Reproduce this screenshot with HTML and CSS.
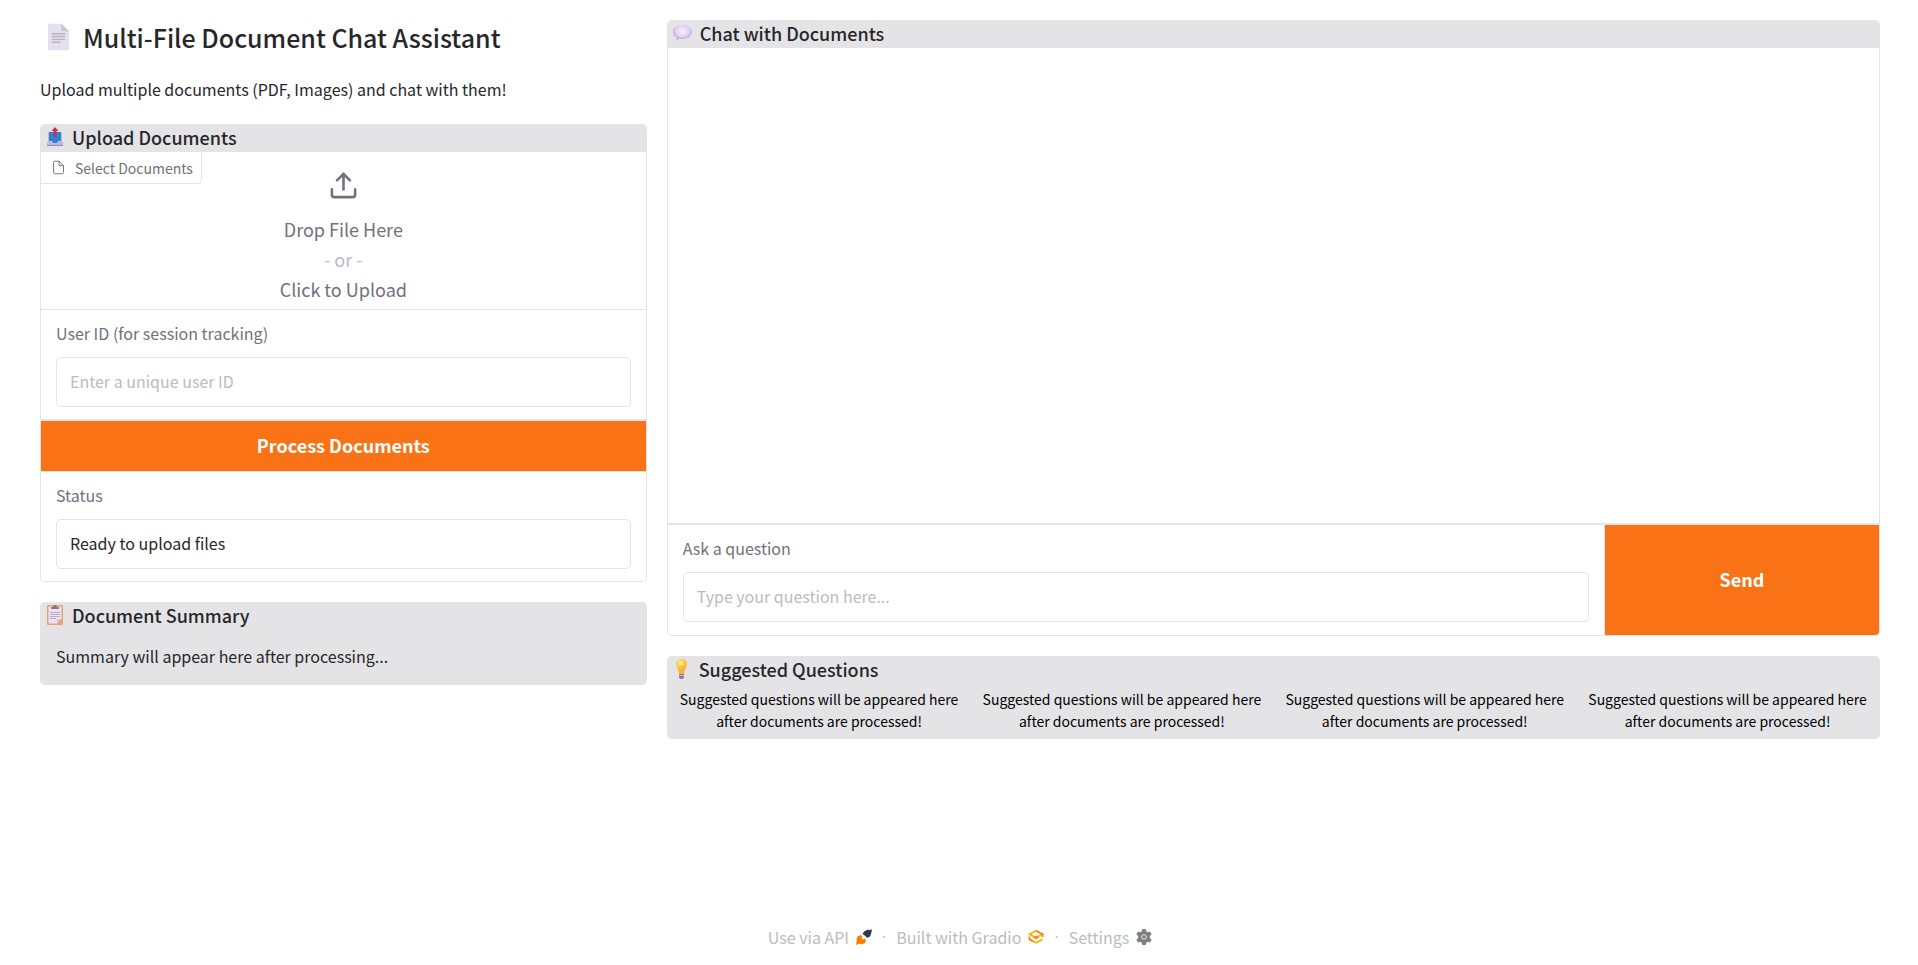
FILE: index.html
```html
<!DOCTYPE html>
<html lang="en">
<head>
    <meta charset="UTF-8">
    <meta name="viewport" content="width=device-width, initial-scale=1.0">
    <title>Multi-File Document Chat Assistant</title>
    <link rel="stylesheet" href="styles.css">
</head>
<body>
    <main class="columns">
        <div class="column">
            <header>
                <h1>
                    <svg class="title-icon" viewBox="0 0 22 28" aria-hidden="true">
                        <path d="M0 1q0-1 1-1h13l8 8v19q0 1-1 1H1q-1 0-1-1z" fill="#e6dff0"/>
                        <path d="M14 0l8 8h-7q-1 0-1-1z" fill="#cbc5d1"/>
                        <path d="M4 10.500h14M4 13.500h14M4 16.500h14M4 19.500h9" stroke="#b9b2bf" stroke-width="1.500"/>
                    </svg>
                    Multi-File Document Chat Assistant
                </h1>
                <p>Upload multiple documents (PDF, Images) and chat with them!</p>
            </header>

            <section class="group">
                <h2>
                    <svg class="icon" viewBox="0 0 16 20" aria-hidden="true">
                        <path d="M1 5h14v12H1z" fill="#cbbcdf"/>
                        <path d="M2 5h12v9h-3l-1 2H6l-1-2H2z" fill="#2b83d6"/>
                        <path d="M0 15h4l2 2h4l2-2h4v4H0z" fill="#c5b3dc"/>
                        <path d="M0 18h16v1H0z" fill="#9b86b5"/>
                        <path d="M8 0l3.500 4H9.500v6h-3V4h-2z" fill="#d5295b"/>
                    </svg>
                    Upload Documents
                </h2>
                <div class="file-block">
                    <span class="file-label">
                        <svg viewBox="0 0 24 24" aria-hidden="true">
                            <path d="M13 2H6a2 2 0 0 0-2 2v16a2 2 0 0 0 2 2h12a2 2 0 0 0 2-2V9z"/>
                            <path d="M13 2v7h7"/>
                        </svg>
                        Select Documents
                    </span>
                    <label class="dropzone">
                        <input type="file" multiple>
                        <svg viewBox="0 0 24 24" aria-hidden="true">
                            <path d="M21 15v4a2 2 0 0 1-2 2H5a2 2 0 0 1-2-2v-4"/>
                            <path d="M17 8l-5-5-5 5"/>
                            <path d="M12 3v12"/>
                        </svg>
                        <span>Drop File Here</span>
                        <span class="or">- or -</span>
                        <span>Click to Upload</span>
                    </label>
                </div>
                <div class="field">
                    <label for="user-id">User ID (for session tracking)</label>
                    <input type="text" id="user-id" placeholder="Enter a unique user ID">
                </div>
                <button class="primary process" type="button">Process Documents</button>
                <div class="field">
                    <label for="status">Status</label>
                    <input type="text" id="status" value="Ready to upload files" readonly>
                </div>
            </section>

            <section class="group filled">
                <h2>
                    <svg class="icon" viewBox="0 0 16 20" aria-hidden="true">
                        <rect width="16" height="20" rx="1" fill="#e3a272"/>
                        <path d="M1.500 1.500h13V14l-4.500 4.500H1.500z" fill="#ece4f5"/>
                        <path d="M10 18.500V14h4.500z" fill="#cfc3da"/>
                        <path d="M4 4V2h2q0-2 2-2t2 2h2v2z" fill="#81798a"/>
                        <path d="M3 7.500h10M3 9.500h10M3 11.500h10M3 13.500h6" stroke="#b5adc0"/>
                    </svg>
                    Document Summary
                </h2>
                <p class="summary">Summary will appear here after processing...</p>
            </section>
        </div>

        <div class="column">
            <section class="group">
                <h2>
                    <svg class="icon bubble" viewBox="0 0 19 16" aria-hidden="true">
                        <defs>
                            <radialGradient id="bubble" cx=".5" cy=".4">
                                <stop offset="0" stop-color="#f6effb"/>
                                <stop offset=".7" stop-color="#e0d4f0"/>
                                <stop offset="1" stop-color="#c3aee0"/>
                            </radialGradient>
                        </defs>
                        <path d="M9.500 0C15 0 19 3 19 7s-4 7-9.500 7q-2 0-3.500-.5Q5 15 3 15.500q1-1.500.5-3Q0 10 0 7c0-4 4-7 9.500-7z" fill="url(#bubble)"/>
                    </svg>
                    Chat with Documents
                </h2>
                <div class="chat-log"></div>
                <div class="ask-row">
                    <div class="field">
                        <label for="question">Ask a question</label>
                        <input type="text" id="question" placeholder="Type your question here...">
                    </div>
                    <button class="primary send" type="button">Send</button>
                </div>
            </section>

            <section class="group filled">
                <h2>
                    <svg class="icon" viewBox="0 0 16 20" aria-hidden="true">
                        <defs>
                            <radialGradient id="bulb" cx=".4" cy=".3">
                                <stop offset="0" stop-color="#fff08a"/>
                                <stop offset="1" stop-color="#fbb93d"/>
                            </radialGradient>
                        </defs>
                        <path d="M7.500 0q5.500 0 5.500 5.500 0 2.500-1.500 4.500T10 15H5q0-3-1.500-5T2 5.500Q2 0 7.500 0z" fill="url(#bulb)"/>
                        <path d="M6 15V9q-1.500-2 0-2t1.500 1.500Q7.500 7 9 7t0 2v6" fill="none" stroke="#ef9d2e" stroke-width=".8"/>
                        <path d="M5 15h5v3.500L8.500 20h-2L5 18.500z" fill="#8d78a8"/>
                        <path d="M5 16.500h5" stroke="#c9b8dc"/>
                    </svg>
                    Suggested Questions
                </h2>
                <div class="suggestions">
                    <button type="button">Suggested questions will be appeared here after documents are processed!</button>
                    <button type="button">Suggested questions will be appeared here after documents are processed!</button>
                    <button type="button">Suggested questions will be appeared here after documents are processed!</button>
                    <button type="button">Suggested questions will be appeared here after documents are processed!</button>
                </div>
            </section>
        </div>
    </main>

    <footer>
        <a href="#api">
            Use via API
            <svg viewBox="0 0 16 16" aria-hidden="true">
                <path d="M16 0l-.8 4.500-1.200 3-3 1.500-.8-1.200L8 6 6.500 5 8 2.500l3.500-1.700 3 .2z" fill="#2f3a4f"/>
                <path d="M0 16l.8-4.500-.3-2L2 7l3-1 1.500 1.500-1 1.500 1.500 1.500L8.500 9.500 10 11l-1 3-3 1.200-3-.5z" fill="#ff7c00"/>
            </svg>
        </a>
        <span class="dot">·</span>
        <a href="#gradio">
            Built with Gradio
            <svg viewBox="0 0 17 16" aria-hidden="true">
                <path d="M1.500 5l7-3.700 7 3.700-7 3.700z" fill="none" stroke="#fbb304" stroke-width="1.900"/>
                <path d="M8.500 1.300l7 3.700v3" fill="none" stroke="#f98613" stroke-width="1.900"/>
                <path d="M5 8.500l3.500-2 3.500 2-3.500 2z" fill="#f98613"/>
                <path d="M1.500 10.500l7 3.700 7-3.700" fill="none" stroke="#fbb304" stroke-width="1.900"/>
                <path d="M1.500 7.500v3l4 2" fill="none" stroke="#f98613" stroke-width="1.900"/>
            </svg>
        </a>
        <span class="dot">·</span>
        <a href="#settings">
            Settings
            <svg viewBox="0 0 24 24" aria-hidden="true">
                <path d="M9.500 0h5l.8 3.500 2.200 1.200 3.400-1 2.500 4.300-2.600 2.500v3l2.600 2.500-2.500 4.300-3.400-1-2.200 1.200-.8 3.500h-5l-.8-3.500-2.200-1.200-3.400 1L.6 16l2.600-2.500v-3L.6 8l2.500-4.300 3.400 1 2.200-1.200z" fill="#7f7f7f"/>
                <circle cx="12" cy="12" r="3.500" fill="#7f7f7f" stroke="#e4e4e4" stroke-width="1.500"/>
            </svg>
        </a>
    </footer>
</body>
</html>
```
FILE: styles.css
```css
* {
    box-sizing: border-box;
}

body {
    margin: 0;
    min-height: 100vh;
    padding: 20px 38px 16px 40px;
    display: flex;
    flex-direction: column;
    justify-content: space-between;
    font-family: "Source Sans Pro", "Noto Sans CJK SC", sans-serif;
    font-size: 16px;
    line-height: 24px;
    color: #27272a;
    background-color: #fff;
}

button,
input {
    font: inherit;
    color: inherit;
}

.columns {
    display: grid;
    grid-template-columns: 1fr 2fr;
    gap: 20px;
}

.column {
    display: flex;
    flex-direction: column;
    gap: 20px;
    min-width: 0;
}

h1 {
    display: flex;
    align-items: center;
    gap: 14px;
    margin: 0 0 24px;
    padding-left: 8px;
    font-size: 25px;
    font-weight: 500;
    line-height: 34px;
}

.title-icon {
    width: 21px;
    height: 28px;
}

header p {
    margin: 0 0 4px;
    line-height: 22px;
}

h2 {
    display: flex;
    align-items: center;
    gap: 9px;
    margin: 0;
    padding: 0 6px 2px;
    font-size: 18px;
    font-weight: 500;
    line-height: 26px;
    background-color: #e4e4e7;
}

.icon {
    width: 16px;
    height: 20px;
}

.bubble {
    width: 19px;
    height: 16px;
    margin: 0 -1px;
}

.group {
    border: 1px solid #e4e4e7;
    border-top: none;
    border-radius: 5px;
    overflow: hidden;
}

.filled {
    background-color: #e4e4e7;
}

/* file upload */
.file-block {
    position: relative;
    border-bottom: 1px solid #e4e4e7;
}

.file-label {
    position: absolute;
    top: 0;
    left: 0;
    display: flex;
    align-items: center;
    gap: 9px;
    height: 32px;
    padding: 0 8px 0 10px;
    font-size: 14px;
    color: #71717a;
    background-color: #fff;
    border: 1px solid #e4e4e7;
    border-width: 0 1px 1px 0;
    border-radius: 0 0 5px 0;
}

.file-label svg {
    width: 15px;
    height: 15px;
    fill: none;
    stroke: currentColor;
    stroke-width: 1.5;
}

.dropzone {
    display: flex;
    flex-direction: column;
    align-items: center;
    padding: 18px 0 5px;
    font-size: 18px;
    line-height: 30px;
    color: #71717a;
    cursor: pointer;
}

.dropzone input {
    position: absolute;
    width: 1px;
    height: 1px;
    opacity: 0;
}

.dropzone svg {
    width: 31px;
    height: 31px;
    margin-bottom: 13px;
    fill: none;
    stroke: currentColor;
    stroke-width: 2;
    stroke-linecap: round;
    stroke-linejoin: round;
}

.or {
    color: #bbbbc2;
}

/* text fields */
.field {
    display: flex;
    flex-direction: column;
    gap: 12px;
    padding: 11px 15px 12px;
}

.field label {
    color: #71717a;
}

.field input {
    width: 100%;
    height: 50px;
    padding: 0 13px 2px;
    border: 1px solid #e4e4e7;
    border-radius: 5px;
    background-color: #fff;
    outline: none;
}

.field input::placeholder {
    color: #bbbbc2;
}

.primary {
    padding: 0 0 2px;
    border: none;
    font-size: 18px;
    font-weight: 700;
    color: #fff;
    background-color: #f97316;
    cursor: pointer;
}

.process {
    display: block;
    width: 100%;
    height: 53px;
    border-top: 2px solid #e4e4e7;
    border-bottom: 1px solid #e4e4e7;
}

.summary {
    margin: 0;
    padding: 14px 15px 16px;
}

/* chat */
.chat-log {
    height: 475px;
}

.ask-row {
    display: flex;
    border-top: 2px solid #e4e4e7;
}

.ask-row .field {
    flex: 1;
    padding-bottom: 13px;
}

.send {
    width: 275px;
    border-left: 1px solid #e4e4e7;
}

.suggestions {
    display: grid;
    grid-template-columns: repeat(4, 1fr);
    padding: 4px 0 6px;
}

.suggestions button {
    padding: 0 10px;
    border: none;
    font-size: 14px;
    line-height: 22px;
    color: #000;
    background: none;
    cursor: pointer;
}

footer {
    display: flex;
    justify-content: center;
    gap: 10px;
    color: #bbbbc2;
}

footer a {
    display: flex;
    align-items: center;
    gap: 7px;
    color: inherit;
    text-decoration: none;
}

footer svg {
    width: 16px;
    height: 16px;
}

.dot {
    font-family: "Open Sans", sans-serif;
}
```
